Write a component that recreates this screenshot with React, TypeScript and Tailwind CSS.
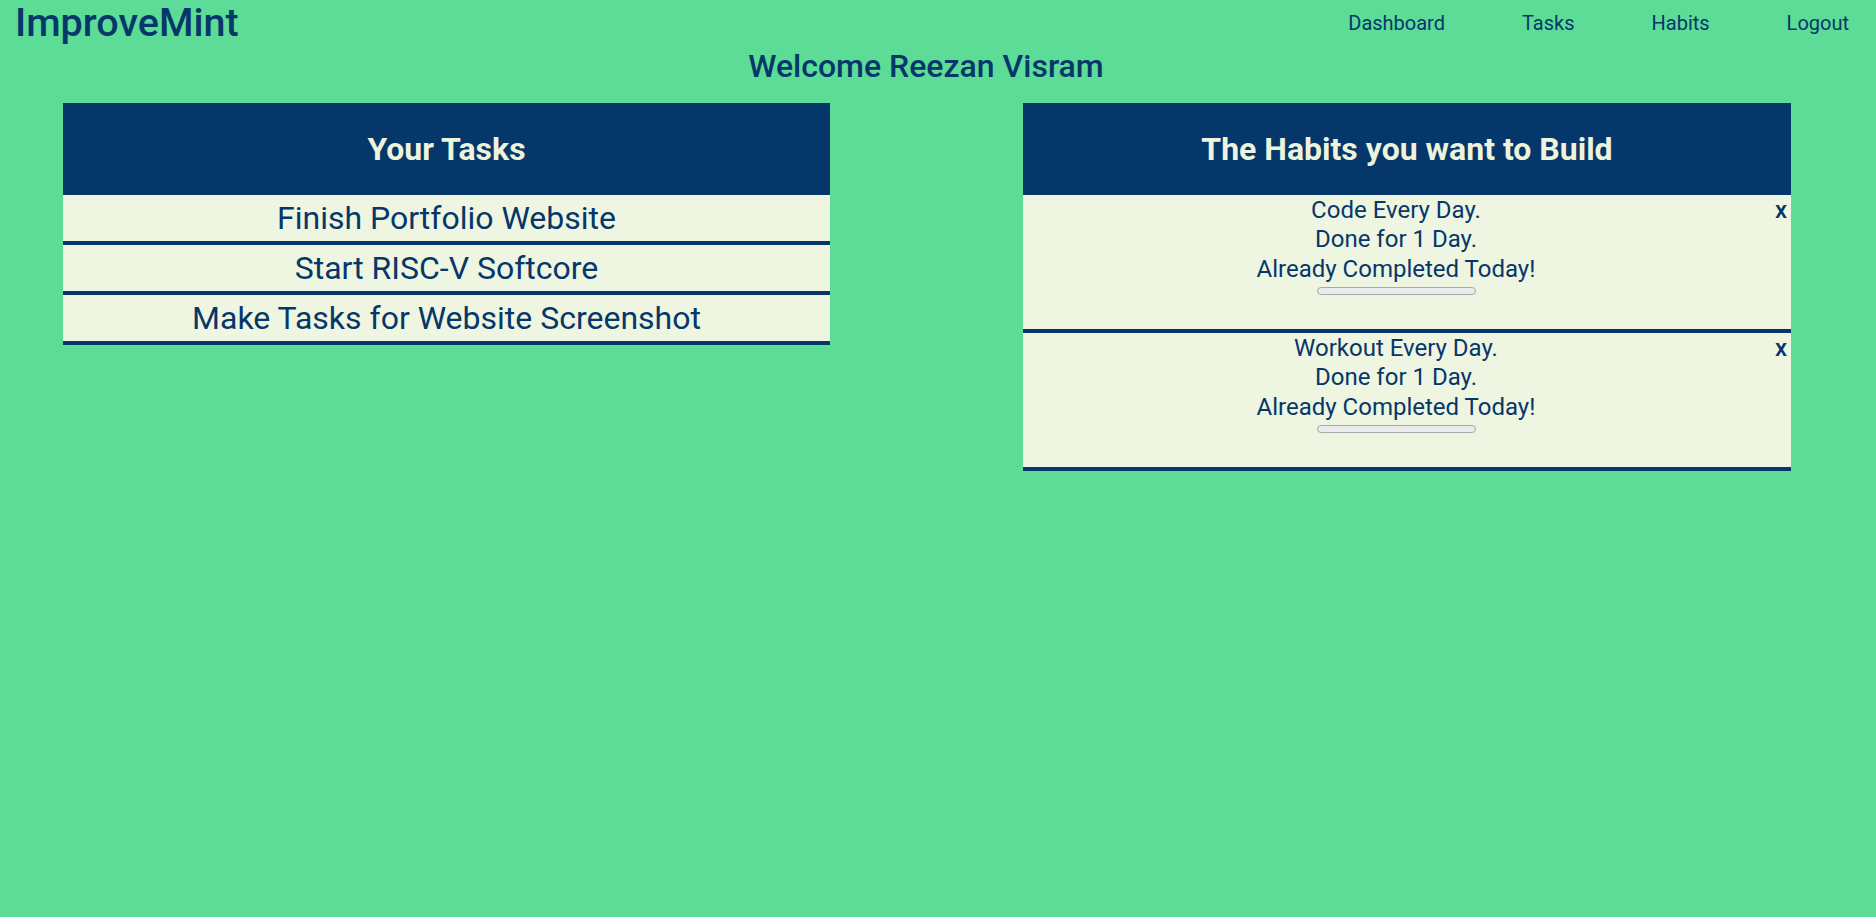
import React from "react";

const tasks = ["Finish Portfolio Website", "Start RISC-V Softcore", "Make Tasks for Website Screenshot"];
const habits = ["Code Every Day.", "Workout Every Day."];

export default function App() {
  return (
    <div className="min-h-[917px] w-full bg-[#5cdc96] text-[#06376a]" style={{ fontFamily: "Roboto, 'Noto Sans', sans-serif" }}>
      <div className="flex h-[46px] items-center justify-between pl-[15px] pr-[27px]">
        <div className="text-[39.5px] font-medium leading-[46px]">ImproveMint</div>
        <nav className="flex items-center gap-[77px] text-[20px] leading-[24px]">
          <a>Dashboard</a>
          <a>Tasks</a>
          <a>Habits</a>
          <a>Logout</a>
        </nav>
      </div>
      <h2 className="flex h-[40px] items-center justify-center pr-[24px] text-[32px] font-medium">Welcome Reezan Visram</h2>
      <div className="mt-[17px] flex items-start gap-[193px] pl-[63px]">
        <div className="w-[767px]">
          <div className="flex h-[92px] items-center justify-center bg-[#06376a] text-[32px] font-bold text-[#eef3dc]">Your Tasks</div>
          {tasks.map((t) => (
            <div key={t} className="flex h-[50px] items-center justify-center border-b-4 border-[#06376a] bg-[#eef5e0] text-[32px] leading-[46px]">
              {t}
            </div>
          ))}
        </div>
        <div className="w-[768px]">
          <div className="flex h-[92px] items-center justify-center bg-[#06376a] text-[32px] font-bold text-[#eef3dc]">The Habits you want to Build</div>
          {habits.map((h) => (
            <div key={h} className="flex h-[138px] border-b-4 border-[#06376a] bg-[#eef5e0]">
              <div className="flex flex-1 flex-col items-center pt-[1px] text-[24px] leading-[29.3px]">
                <div>{h}</div>
                <div>Done for 1 Day.</div>
                <div>Already Completed Today!</div>
                <div className="mt-[3px] h-[8px] w-[159px] rounded-full border border-[#a8a8a8] bg-[#ececec]" />
              </div>
              <button className="h-[29px] w-[22px] pr-[4px] pt-[2px] text-right text-[24px] font-medium leading-[27px] text-[#06376a]">x</button>
            </div>
          ))}
        </div>
      </div>
    </div>
  );
}
